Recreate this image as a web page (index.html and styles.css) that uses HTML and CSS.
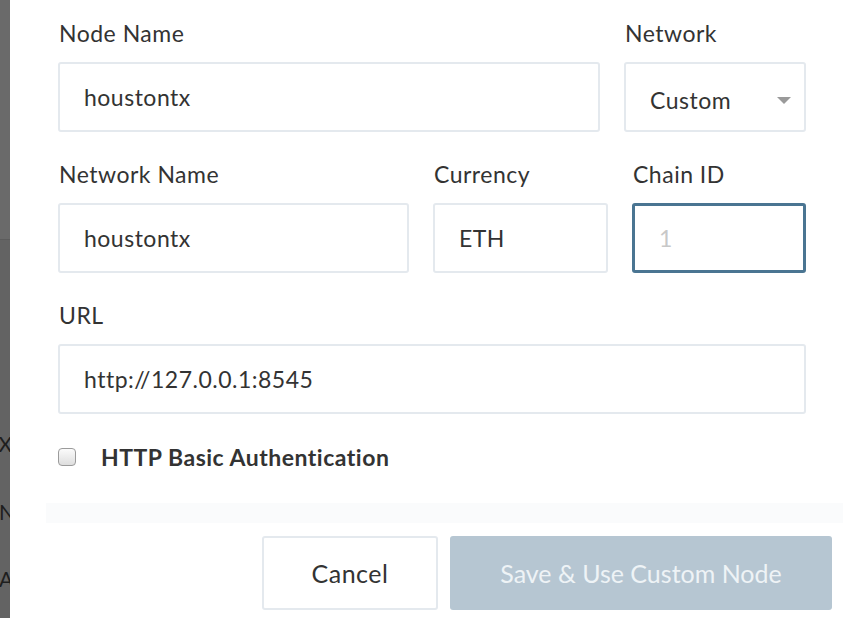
FILE: index.html
```html
<!DOCTYPE html>
<html>
<head>
<meta charset="utf-8">
<link rel="stylesheet" href="styles.css">
</head>
<body>
<div class="backdrop">
  <div class="backdrop-top"></div>
  <div class="backdrop-bottom">
    <div class="bd-line bd-tx">TX</div>
    <div class="bd-line bd-nu">Nu</div>
    <div class="bd-line bd-ac">Ac</div>
  </div>
</div>
<div class="modal">
  <form class="form">
    <div class="row row-1">
      <div class="field">
        <label class="label">Node Name</label>
        <input class="input" type="text" value="houstontx">
      </div>
      <div class="field">
        <label class="label">Network</label>
        <div class="select">
          <span>Custom</span>
          <span class="caret"></span>
        </div>
      </div>
    </div>
    <div class="row row-2">
      <div class="field">
        <label class="label">Network Name</label>
        <input class="input" type="text" value="houstontx">
      </div>
      <div class="field">
        <label class="label">Currency</label>
        <input class="input" type="text" value="ETH">
      </div>
      <div class="field">
        <label class="label">Chain ID</label>
        <input class="input input-focus" type="text" placeholder="1">
      </div>
    </div>
    <div class="row row-3">
      <div class="field">
        <label class="label">URL</label>
        <input class="input" type="text" value="http://127.0.0.1:8545">
      </div>
    </div>
    <div class="check-row">
      <span class="checkbox"></span>
      <span class="check-label">HTTP Basic Authentication</span>
    </div>
  </form>
  <div class="fade-band"></div>
  <div class="footer">
    <button class="btn btn-cancel" type="button">Cancel</button>
    <button class="btn btn-primary" type="button">Save &amp; Use Custom Node</button>
  </div>
</div>
</body>
</html>
```

FILE: styles.css
```css
* { box-sizing: border-box; }
html, body { margin: 0; padding: 0; }
body {
  width: 848px;
  height: 618px;
  overflow: hidden;
  display: flex;
  background: #fff;
  font-family: Lato, "Open Sans", sans-serif;
  color: #333;
}
.backdrop {
  width: 10px;
  flex: none;
  display: flex;
  flex-direction: column;
  overflow: hidden;
}
.backdrop-top {
  height: 240px;
  background: #6a6a6a;
  border-bottom: 1px solid #5c5c5c;
}
.backdrop-bottom {
  flex: 1;
  background: #636363;
  padding-top: 192px;
}
.bd-line {
  font-size: 21px;
  color: #1e1e1e;
  white-space: nowrap;
  line-height: 24px;
}
.bd-tx { margin-left: -14px; }
.bd-nu { margin-top: 44px; margin-left: -1px; }
.bd-ac { margin-top: 43px; margin-left: -1px; }

.modal {
  flex: 1;
  min-width: 0;
  display: flex;
  flex-direction: column;
  padding: 18px 16px 8px 48px;
}
.form {
  width: 748px;
  display: flex;
  flex-direction: column;
  gap: 27px;
}
.row { display: grid; gap: 24px; }
.row-1 { grid-template-columns: 542px 182px; }
.row-2 { grid-template-columns: 351px 175px 174px; }
.row-3 { grid-template-columns: 748px; }
.field { display: flex; flex-direction: column; }
.label {
  font-size: 23px;
  letter-spacing: 0.5px;
  line-height: 30px;
  margin-bottom: 14px;
  color: #333;
  padding-left: 1px;
}
.input {
  height: 70px;
  border: 2px solid #e4e9ee;
  border-radius: 3px;
  padding: 0 24px;
  font-family: inherit;
  font-size: 23px;
  letter-spacing: 0.5px;
  color: #333;
  outline: none;
  width: 100%;
}
.input::placeholder { color: #c8c8c8; }
.input-focus {
  border: 3px solid #4a7592;
  padding-left: 24px;
}
.select {
  height: 70px;
  border: 2px solid #e4e9ee;
  border-radius: 3px;
  padding: 6px 13px 0 24px;
  font-size: 23px;
  letter-spacing: 0.5px;
  display: flex;
  align-items: center;
  justify-content: space-between;
}
.caret {
  width: 0;
  height: 0;
  border-left: 7px solid transparent;
  border-right: 7px solid transparent;
  border-top: 7px solid #9a9a9a;
  margin-top: 1px;
}
.check-row {
  display: flex;
  align-items: center;
  margin-top: 1px;
  height: 30px;
}
.checkbox {
  width: 18px;
  height: 18px;
  border: 1px solid #9b9b9b;
  border-radius: 4px;
  background: linear-gradient(#fbfbfb, #dedede);
  margin-right: 25px;
}
.check-label {
  font-size: 23px;
  letter-spacing: 0.5px;
  font-weight: 700;
  color: #333;
}
.fade-band {
  height: 20px;
  margin: 31px -11px 0 -12px;
  background: #fafbfc;
}
.footer {
  display: flex;
  justify-content: flex-end;
  gap: 12px;
  margin-top: 13px;
}
.btn {
  height: 74px;
  border-radius: 3px;
  font-family: inherit;
  font-size: 25px;
  cursor: pointer;
}
.btn-cancel {
  width: 176px;
  background: #fff;
  border: 2px solid #e4e9ee;
  color: #333;
  letter-spacing: 0.5px;
}
.btn-primary {
  width: 382px;
  background: #b6c6d2;
  border: none;
  color: #eef3f6;
}
```
